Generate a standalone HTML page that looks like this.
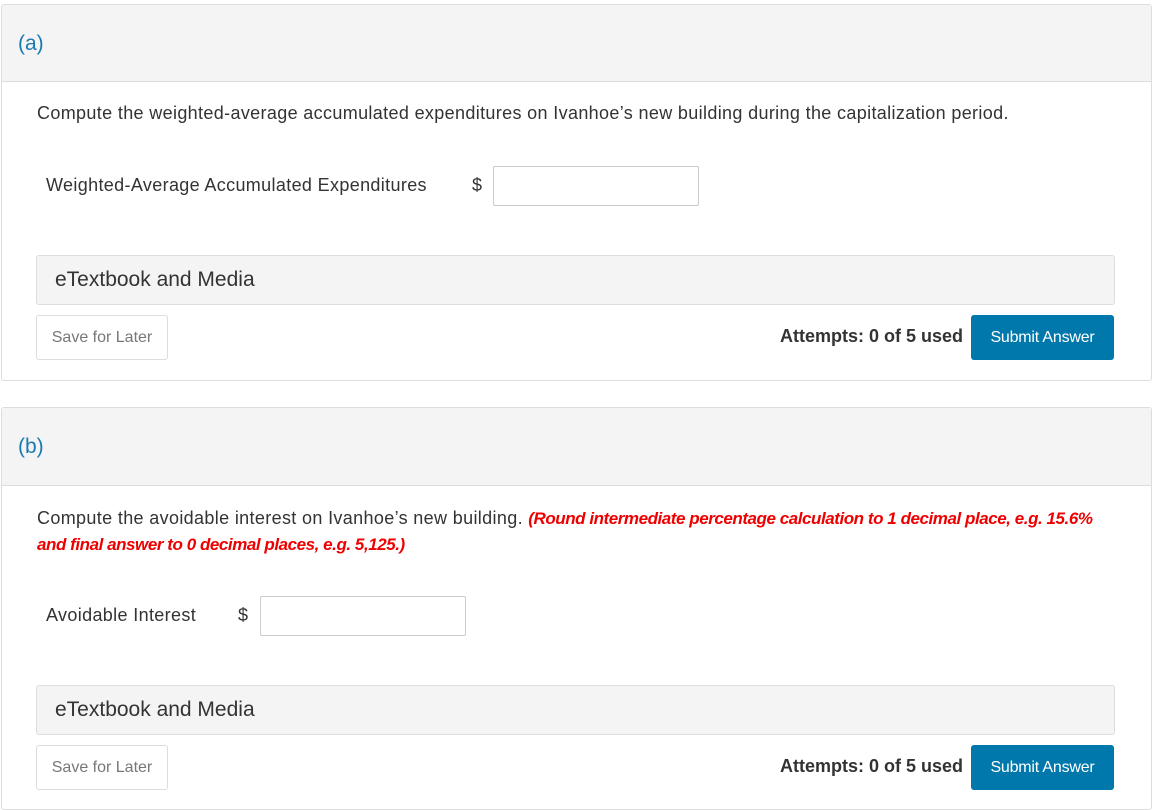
<!DOCTYPE html>
<html><head><style>
body{margin:0;width:1158px;height:810px;background:#fff;font-family:"Liberation Sans",sans-serif;color:#333;position:relative;overflow:hidden}
.a{position:absolute;white-space:nowrap}
.card{position:absolute;left:1px;width:1149px;border:1px solid #ddd;border-radius:3px;background:#fff}
.hd{position:absolute;left:0;right:0;top:0;background:#f4f4f4;border-bottom:1px solid #ddd}
.lbl{font-size:21px;color:#1a7ab0}
.txt{font-size:18px;letter-spacing:0.35px}
.inp{position:absolute;width:204px;height:38px;border:1px solid #ccc;border-radius:2px;background:#fff}
.et{position:absolute;left:36px;width:1077px;height:48px;background:#f4f4f4;border:1px solid #ddd;border-radius:3px;font-size:21px;letter-spacing:0;line-height:48px;text-indent:18px;color:#333}
.sv{position:absolute;left:36px;width:130px;height:43px;border:1px solid #ddd;border-radius:3px;font-size:16px;color:#777;line-height:43px;text-align:center}
.at{font-size:18px;font-weight:bold;color:#333}
.sb{position:absolute;left:971px;width:143px;height:45px;background:#0078ab;border-radius:3px;color:#fff;font-size:16px;line-height:45px;text-align:center;letter-spacing:-0.2px}
.red{color:#e00;font-weight:bold;font-style:italic;font-size:17px;letter-spacing:-0.45px}
</style></head><body>
<div class="card" style="top:4px;height:375px">
 <div class="hd" style="height:76px"></div>
</div>
<div class="a lbl" style="left:18px;top:32px">(a)</div>
<div class="a txt" style="left:37px;top:103px">Compute the weighted-average accumulated expenditures on Ivanhoe’s new building during the capitalization period.</div>
<div class="a txt" style="left:46px;top:175px">Weighted-Average Accumulated Expenditures</div>
<div class="a txt" style="left:472px;top:175px">$</div>
<div class="inp" style="left:493px;top:166px"></div>
<div class="et" style="top:255px">eTextbook and Media</div>
<div class="sv" style="top:315px">Save for Later</div>
<div class="a at" style="left:780px;top:326px">Attempts: 0 of 5 used</div>
<div class="sb" style="top:315px">Submit Answer</div>

<div class="card" style="top:407px;height:401px">
 <div class="hd" style="height:77px"></div>
</div>
<div class="a lbl" style="left:18px;top:435px">(b)</div>
<div class="a txt" style="left:37px;top:508px">Compute the avoidable interest on Ivanhoe’s new building. <span class="red">(Round intermediate percentage calculation to 1 decimal place, e.g. 15.6%</span></div>
<div class="a txt red" style="left:37px;top:535px">and final answer to 0 decimal places, e.g. 5,125.)</div>
<div class="a txt" style="left:46px;top:605px">Avoidable Interest</div>
<div class="a txt" style="left:238px;top:605px">$</div>
<div class="inp" style="left:260px;top:596px"></div>
<div class="et" style="top:685px">eTextbook and Media</div>
<div class="sv" style="top:745px">Save for Later</div>
<div class="a at" style="left:780px;top:756px">Attempts: 0 of 5 used</div>
<div class="sb" style="top:745px">Submit Answer</div>
</body></html>
